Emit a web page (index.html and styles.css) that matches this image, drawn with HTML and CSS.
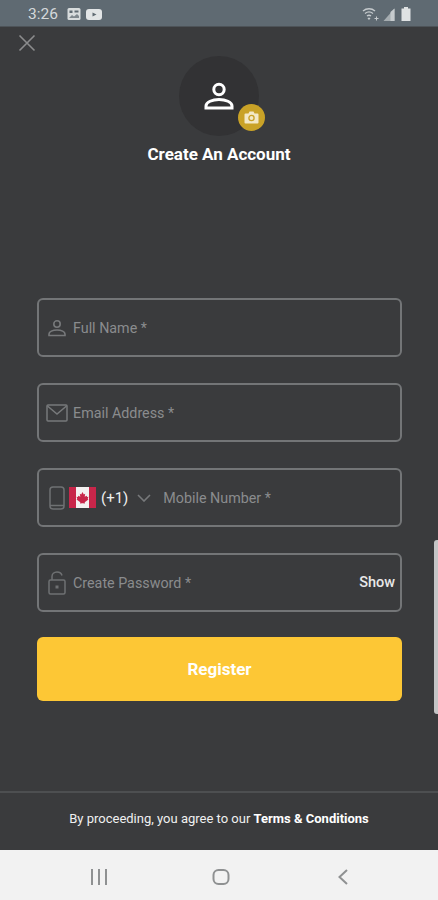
FILE: index.html
```html
<!DOCTYPE html>
<html lang="en">
<head>
<meta charset="utf-8">
<title>Create An Account</title>
<link rel="stylesheet" href="styles.css">
</head>
<body>
<div class="phone">
  <header class="status">
    <div class="status-left">
      <span class="time">3:26</span>
      <svg class="st-ic" width="14" height="12" viewBox="0 0 14 12"><rect x="0.5" y="0" width="13" height="12" rx="1.500" fill="#d8dcdd"/><rect x="2.500" y="2.500" width="3" height="2.500" fill="#5f6a72"/><path d="M2 10l3-3 2 1.500 3-2.500 2 2v2z" fill="#7f888e"/><rect x="7.500" y="2.500" width="4" height="2" fill="#5f6a72"/></svg>
      <svg class="st-ic st-yt" width="16" height="11" viewBox="0 0 16 11"><rect width="16" height="11" rx="3" fill="#e2e5e6"/><path d="M6.500 3.500l4 2-4 2z" fill="#5f6a72"/></svg>
    </div>
    <div class="status-right">
      <svg class="wifi" width="17" height="14" viewBox="0 0 17 14" fill="none" stroke="#c6cbce" stroke-width="1.300"><path d="M1 4c3.500-3 8.500-3 12 0M3 6.500c2.500-2 5.500-2 8 0M5 9c1.300-1 2.700-1 4 0"/><path d="M6 11l1 1 1-1"/><path d="M12.500 11.500h4M14.500 9.500v4" stroke-width="1"/></svg>
      <svg width="12" height="13" viewBox="0 0 12 13"><path d="M11.500 0.500v12.500h-11z" fill="#a5acb0"/><path d="M11.500 0.500v12.500h-4v-9z" fill="#c6cbce"/></svg>
      <svg class="battery" width="10" height="14" viewBox="0 0 10 14"><path d="M3 0h4v1.500h2.500v12.500h-9v-12.500h2.500z" fill="#dfe2e3"/></svg>
    </div>
  </header>

  <main class="screen">
    <svg class="close" width="18" height="18" viewBox="0 0 18 18" fill="none" stroke="#8b8c8d" stroke-width="1.600"><path d="M1.500 1.500l15 15M16.500 1.500l-15 15"/></svg>
    <div class="scrollbar"></div>

    <section class="head">
      <div class="avatar">
        <svg width="30" height="28" viewBox="0 0 30 28" fill="none" stroke="#fff" stroke-width="3"><circle cx="15" cy="7.500" r="5.200"/><path d="M2 26v-2c0-4 6.500-6.500 13-6.500s13 2.500 13 6.500v2z"/></svg>
        <span class="badge">
          <svg width="15" height="13" viewBox="0 0 15 13"><path d="M1.500 2.500h3l1-2h4l1 2h3a1 1 0 0 1 1 1v8a1 1 0 0 1-1 1h-12a1 1 0 0 1-1-1v-8a1 1 0 0 1 1-1z" fill="#f3e8c6"/><circle cx="7.500" cy="7" r="2.600" fill="none" stroke="#c9a227" stroke-width="1.300"/></svg>
        </span>
      </div>
      <h1 class="title">Create An Account</h1>
    </section>

    <form class="form">
      <div class="field">
        <span class="lead"><svg width="18" height="18" viewBox="0 0 18 18" fill="none" stroke="#77797b" stroke-width="1.600"><circle cx="9" cy="5" r="3.200"/><path d="M1 16.500v-1.500c0-2.300 3.600-4 8-4s8 1.700 8 4v1.500z"/></svg></span>
        <span class="ph">Full Name *</span>
      </div>
      <div class="field">
        <span class="lead"><svg width="22" height="18" viewBox="0 0 22 18" fill="none" stroke="#77797b" stroke-width="1.500"><rect x="1" y="1" width="20" height="16" rx="1"/><path d="M1.500 2l9.500 8 9.500-8"/></svg></span>
        <span class="ph">Email Address *</span>
      </div>
      <div class="field field-phone">
        <svg class="phone-ic" width="16" height="24" viewBox="0 0 16 24" fill="none" stroke="#6f7173" stroke-width="1.500"><rect x="1" y="1" width="14" height="22" rx="3"/><path d="M1 19.500h14"/></svg>
        <svg class="flag" width="27" height="21" viewBox="0 0 27 21"><rect width="27" height="21" fill="#f4f1f1"/><rect width="7" height="21" fill="#c8264a"/><rect x="20" width="7" height="21" fill="#c8264a"/><path d="M13.500 5l1.300 2.400 1.400-.6-.5 2.900 1.900-1 .5 1.300 1.400-.2-.8 2.200.8.600-3.800 2.700.3 1.300-2.200-.3h-.6l-2.200.3.300-1.300-3.800-2.700.8-.6-.8-2.200 1.400.2.500-1.300 1.900 1-.5-2.900 1.400.6z" fill="#c8264a"/></svg>
        <span class="code">(+1)</span>
        <svg class="chev" width="14" height="8" viewBox="0 0 14 8" fill="none" stroke="#77797b" stroke-width="1.600"><path d="M1 1l6 6 6-6"/></svg>
        <span class="ph">Mobile Number *</span>
      </div>
      <div class="field">
        <span class="lead"><svg width="18" height="24" viewBox="0 0 18 24" fill="none" stroke="#6f7173" stroke-width="1.500"><rect x="1" y="9" width="16" height="14" rx="1.500"/><path d="M4 9v-3.500c0-2.500 2-4.500 5-4.500s4.500 1.500 5 3.500"/><rect x="7.500" y="14.500" width="3" height="3" fill="#6f7173" stroke="none"/></svg></span>
        <span class="ph">Create Password *</span>
        <span class="show">Show</span>
      </div>
      <button class="register" type="button">Register</button>
    </form>

    <footer class="terms">
      <p>By proceeding, you agree to our <strong>Terms &amp; Conditions</strong></p>
    </footer>
  </main>

  <nav class="navbar">
    <svg width="18" height="16" viewBox="0 0 18 16" fill="#8f9192"><rect x="1" y="0" width="2" height="16"/><rect x="8" y="0" width="2" height="16"/><rect x="15" y="0" width="2" height="16"/></svg>
    <svg width="18" height="16" viewBox="0 0 18 16" fill="none" stroke="#8f9192" stroke-width="2"><rect x="1.500" y="1" width="15" height="14" rx="5"/></svg>
    <svg width="12" height="16" viewBox="0 0 12 16" fill="none" stroke="#8f9192" stroke-width="2"><path d="M10 1l-7.500 7 7.500 7"/></svg>
  </nav>
</div>
</body>
</html>
```

FILE: styles.css
```css
* { box-sizing: border-box; }
html, body { margin: 0; padding: 0; }
body { width: 438px; height: 900px; overflow: hidden; font-family: Roboto, "Liberation Sans", sans-serif; }
.phone { width: 438px; height: 900px; display: flex; flex-direction: column; background: #3a3b3d; }

.status { height: 27px; flex: none; display: flex; align-items: center; justify-content: space-between; padding: 2px 27px 0 28px; background: #5f6a72; border-bottom: 1px solid #4d5358; }
.status-left { display: flex; align-items: center; }
.time { font-size: 15.500px; color: #d5d9db; width: 39px; }
.st-yt { margin-left: 5px; }
.status-right { display: flex; align-items: center; gap: 4px; }
.battery { margin-left: 2px; }

.screen { position: relative; flex: 1; display: flex; flex-direction: column; min-height: 0; }
.close { position: absolute; left: 18px; top: 7px; }
.scrollbar { position: absolute; right: 0; top: 513px; width: 4px; height: 174px; background: #c4c5c6; border-radius: 3px 0 0 3px; }

.head { display: flex; flex-direction: column; align-items: center; padding-top: 29px; }
.avatar { position: relative; width: 80px; height: 80px; border-radius: 50%; background: #323234; display: flex; align-items: center; justify-content: center; }
.badge { position: absolute; left: 59px; top: 48px; width: 27px; height: 27px; border-radius: 50%; background: #c9a227; display: flex; align-items: center; justify-content: center; }
.title { margin: 7px 0 0; font-size: 17px; line-height: 22px; font-weight: 700; color: #fff; }

.form { display: flex; flex-direction: column; gap: 26px; padding: 133px 36px 0 37px; }
.field { height: 59px; border: 2px solid #737577; border-radius: 6px; display: flex; align-items: center; padding: 0 5px 0 4px; }
.lead { width: 27px; flex: none; display: flex; justify-content: center; margin-right: 3px; }
.ph { font-size: 14.300px; color: #8a8c8e; }
.show { margin-left: auto; font-size: 14.500px; font-weight: 500; color: #e8e8e8; }
.field-phone { padding-left: 10px; }
.phone-ic { flex: none; }
.flag { flex: none; margin-left: 4px; }
.code { font-size: 15px; color: #f0f0f0; margin-left: 5px; }
.chev { flex: none; margin-left: 9px; margin-right: 12px; }
.register { height: 64px; border: 0; border-radius: 6px; background: #fdc735; color: #fff; font: 700 17px Roboto, "Liberation Sans", sans-serif; margin-top: -1px; }

.terms { margin-top: auto; height: 59px; border-top: 2px solid #4d4f51; display: flex; align-items: center; justify-content: center; padding-bottom: 7px; }
.terms p { margin: 0; font-size: 13px; color: #f0f0f0; }
.terms strong { font-weight: 700; color: #fff; }

.navbar { height: 50px; flex: none; background: #f2f2f2; display: grid; grid-template-columns: 89px 155px 89px; justify-content: center; justify-items: center; align-items: center; padding: 4px 0 0 4px; }
```
